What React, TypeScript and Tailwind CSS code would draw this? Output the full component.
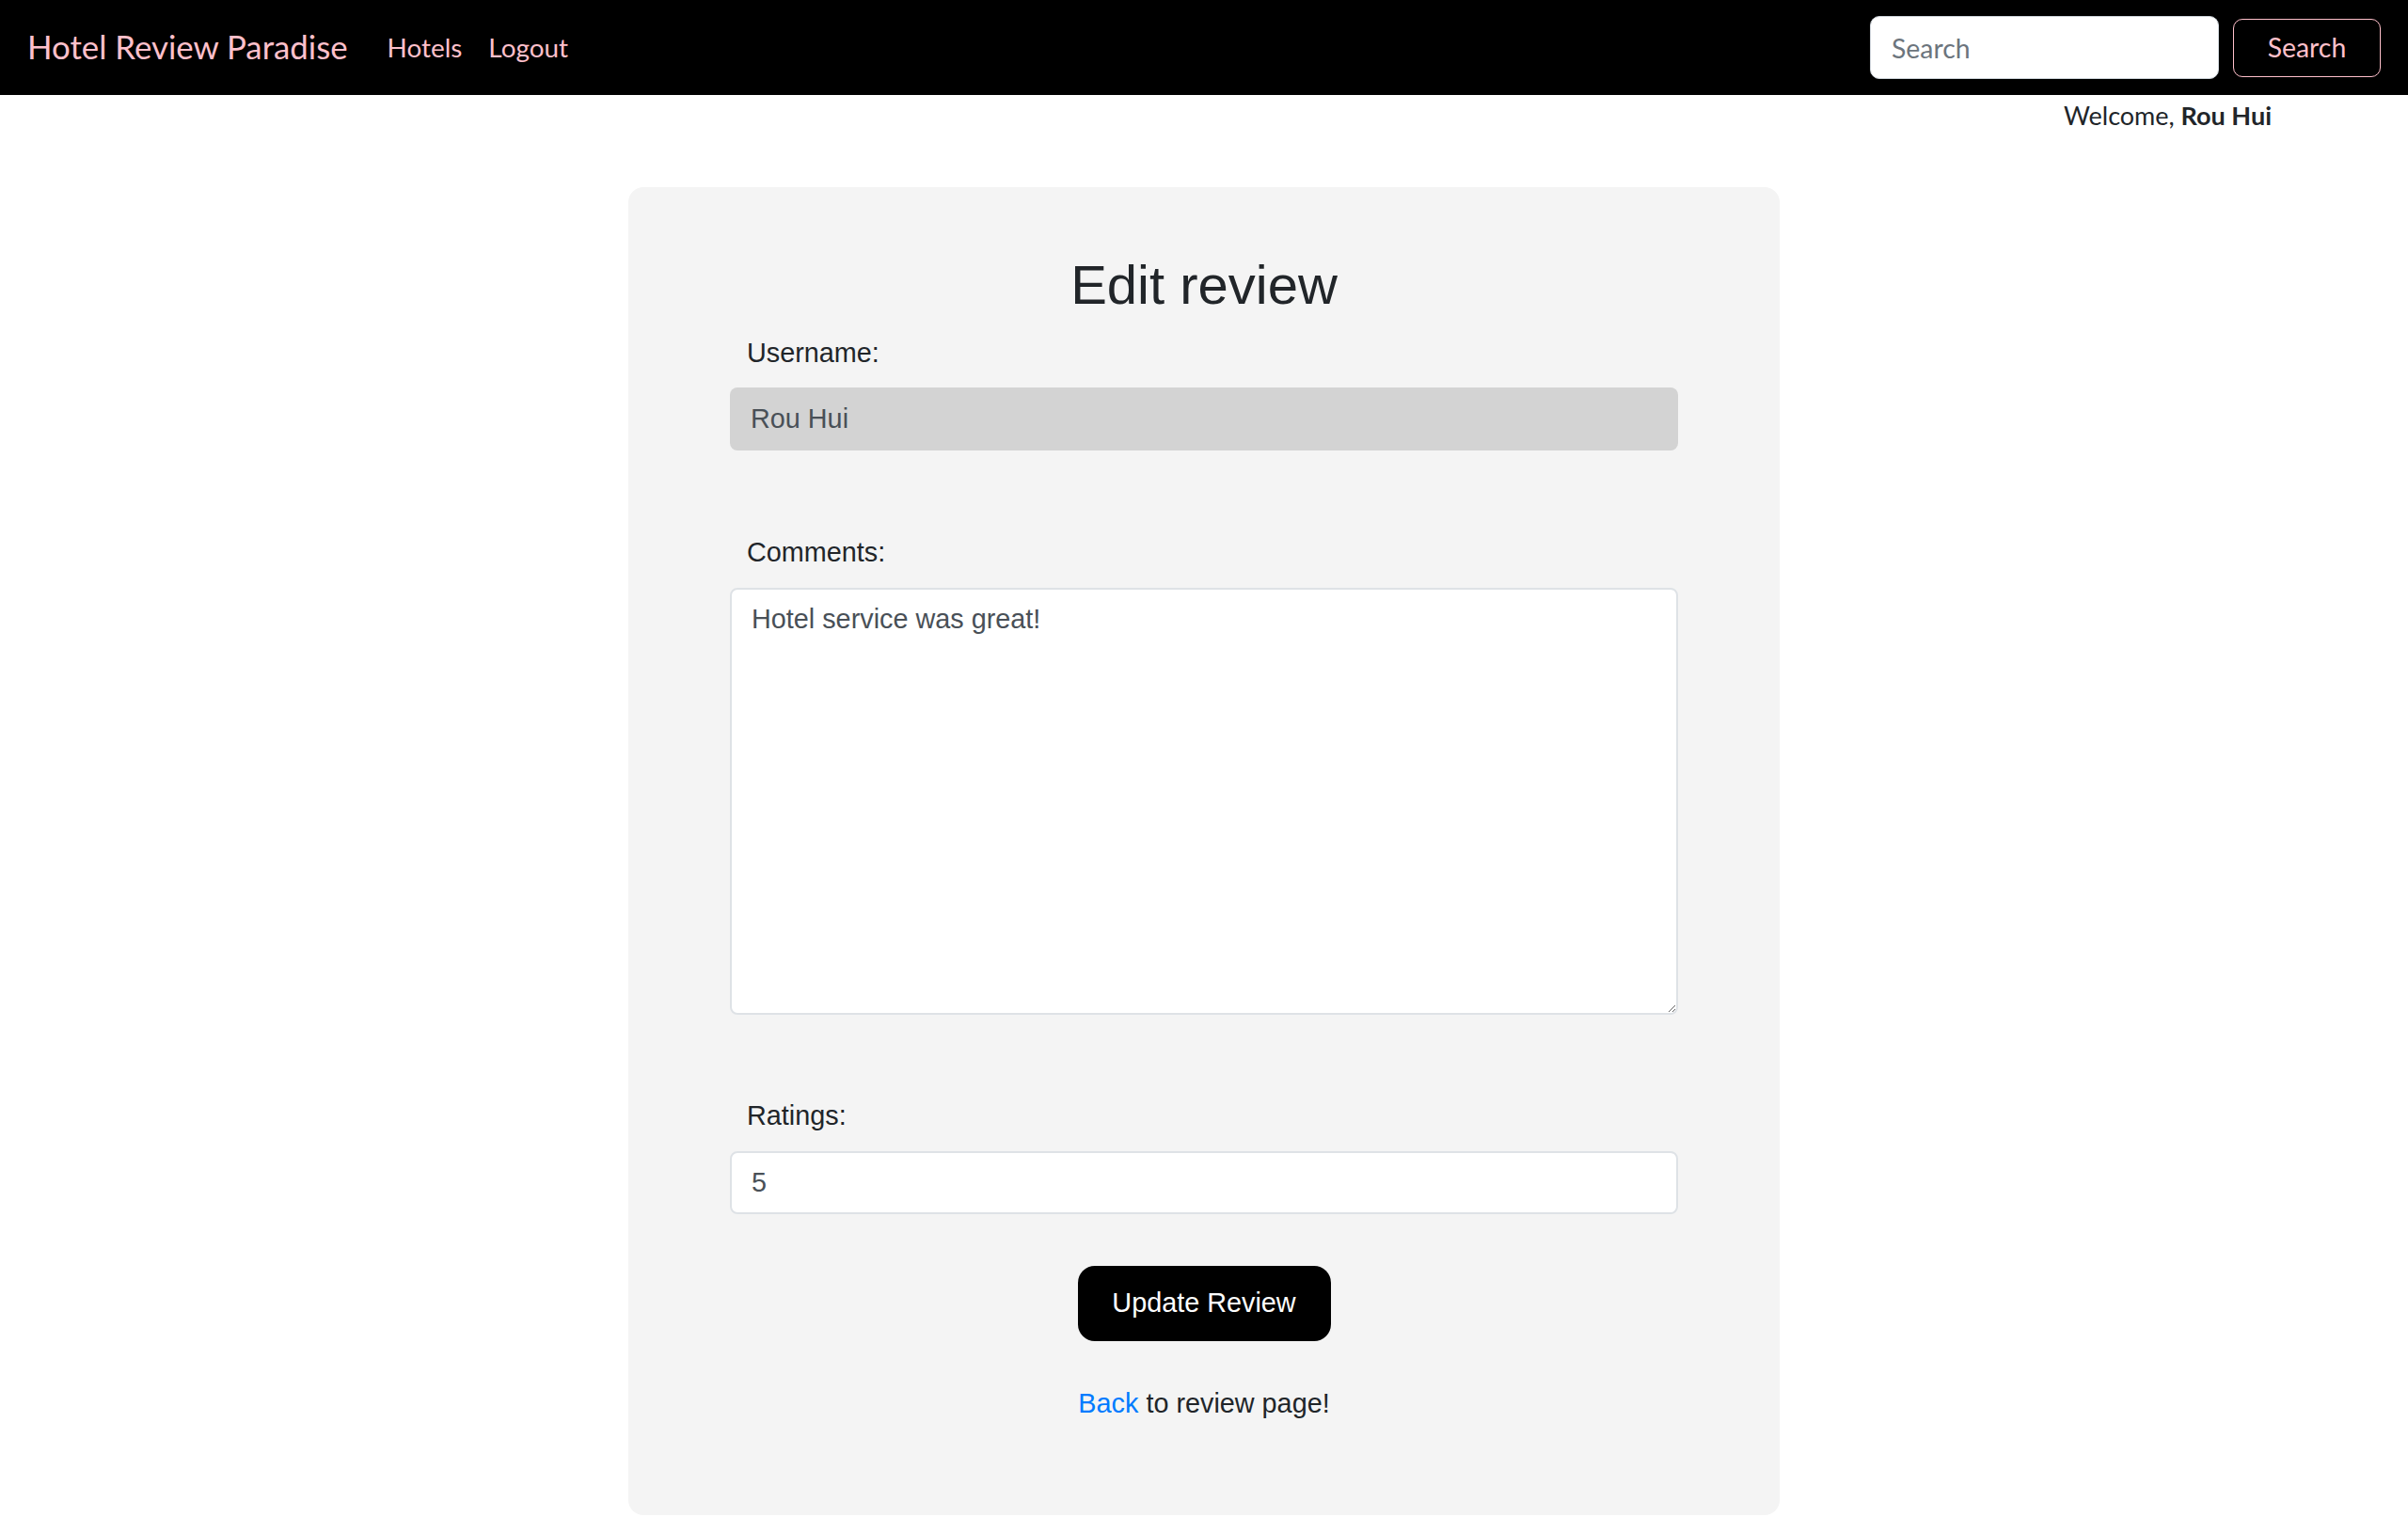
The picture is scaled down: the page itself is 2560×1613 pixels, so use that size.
import React from "react";

const navFont = { fontFamily: '"Lato", "Noto Sans", sans-serif' };

const Navbar = () => {
  return (
    <nav className="flex h-[101px] items-center bg-black px-[29px]" style={navFont}>
      <a href="#" className="mr-[42px] text-[34.8px] text-[#ffc0cb]">
        Hotel Review Paradise
      </a>
      <ul className="flex items-center gap-[28px] text-[27.9px] text-[#ffc0cb]">
        <li>
          <a href="#">Hotels</a>
        </li>
        <li>
          <a href="#">Logout</a>
        </li>
      </ul>
      <form className="ml-auto flex items-center gap-[15px]">
        <input
          type="text"
          placeholder="Search"
          className="h-[67px] w-[371px] rounded-[10px] border border-[#ced4da] bg-white px-[22px] text-[28.4px] text-[#495057] placeholder:text-[#6c757d]"
        />
        <button
          type="button"
          className="h-[62px] w-[157px] rounded-[10px] border border-[#ffc0cb] text-[28.4px] text-[#ffc0cb]"
        >
          Search
        </button>
      </form>
    </nav>
  );
};

const Label = ({ children }: { children: React.ReactNode }) => (
  <label className="block pl-[18px] text-[28.8px] leading-[43px] text-[#212529]">
    {children}
  </label>
);

export default function App() {
  return (
    <div className="min-h-screen bg-white">
      <Navbar />
      <div
        className="flex justify-end pr-[145px] pt-[3px] text-[27px] leading-[38px] text-[#212529]"
        style={navFont}
      >
        Welcome,&nbsp;<span className="font-bold">Rou Hui</span>
      </div>
      <div
        className="mx-auto mt-[57px] w-[1224px] rounded-[16px] bg-[#f4f4f4] px-[108px] pb-[97px] pt-[69px]"
        style={{ fontFamily: '"Liberation Sans", Arial, sans-serif' }}
      >
        <h1 className="text-center text-[58px] leading-[70px] text-[#212529]">Edit review</h1>
        <div className="mt-[16px]">
          <Label>Username:</Label>
          <input
            type="text"
            value="Rou Hui"
            readOnly
            className="mt-[15px] block h-[67px] w-full rounded-[8px] bg-[#d3d3d3] px-[22px] text-[28.8px] text-[#495057]"
          />
        </div>
        <div className="mt-[87px]">
          <Label>Comments:</Label>
          <textarea
            defaultValue="Hotel service was great!"
            className="mt-[16px] block h-[454px] w-full rounded-[8px] border-2 border-[#dee2e6] bg-white px-[21px] py-[10px] text-[28.8px] leading-[1.5] text-[#495057]"
          />
        </div>
        <div className="mt-[86px]">
          <Label>Ratings:</Label>
          <input
            type="number"
            defaultValue={5}
            className="mt-[16px] block h-[67px] w-full rounded-[8px] border-2 border-[#dee2e6] bg-white px-[21px] text-[28.8px] text-[#495057]"
          />
        </div>
        <div className="mt-[55px] flex justify-center">
          <button
            type="button"
            className="h-[80px] w-[269px] rounded-[18px] bg-black text-[28.8px] text-white"
          >
            Update Review
          </button>
        </div>
        <p className="mt-[45px] text-center text-[28.8px] leading-[43px] text-[#212529]">
          <a href="#" className="text-[#007bff]">
            Back
          </a>{" "}
          to review page!
        </p>
      </div>
    </div>
  );
}
